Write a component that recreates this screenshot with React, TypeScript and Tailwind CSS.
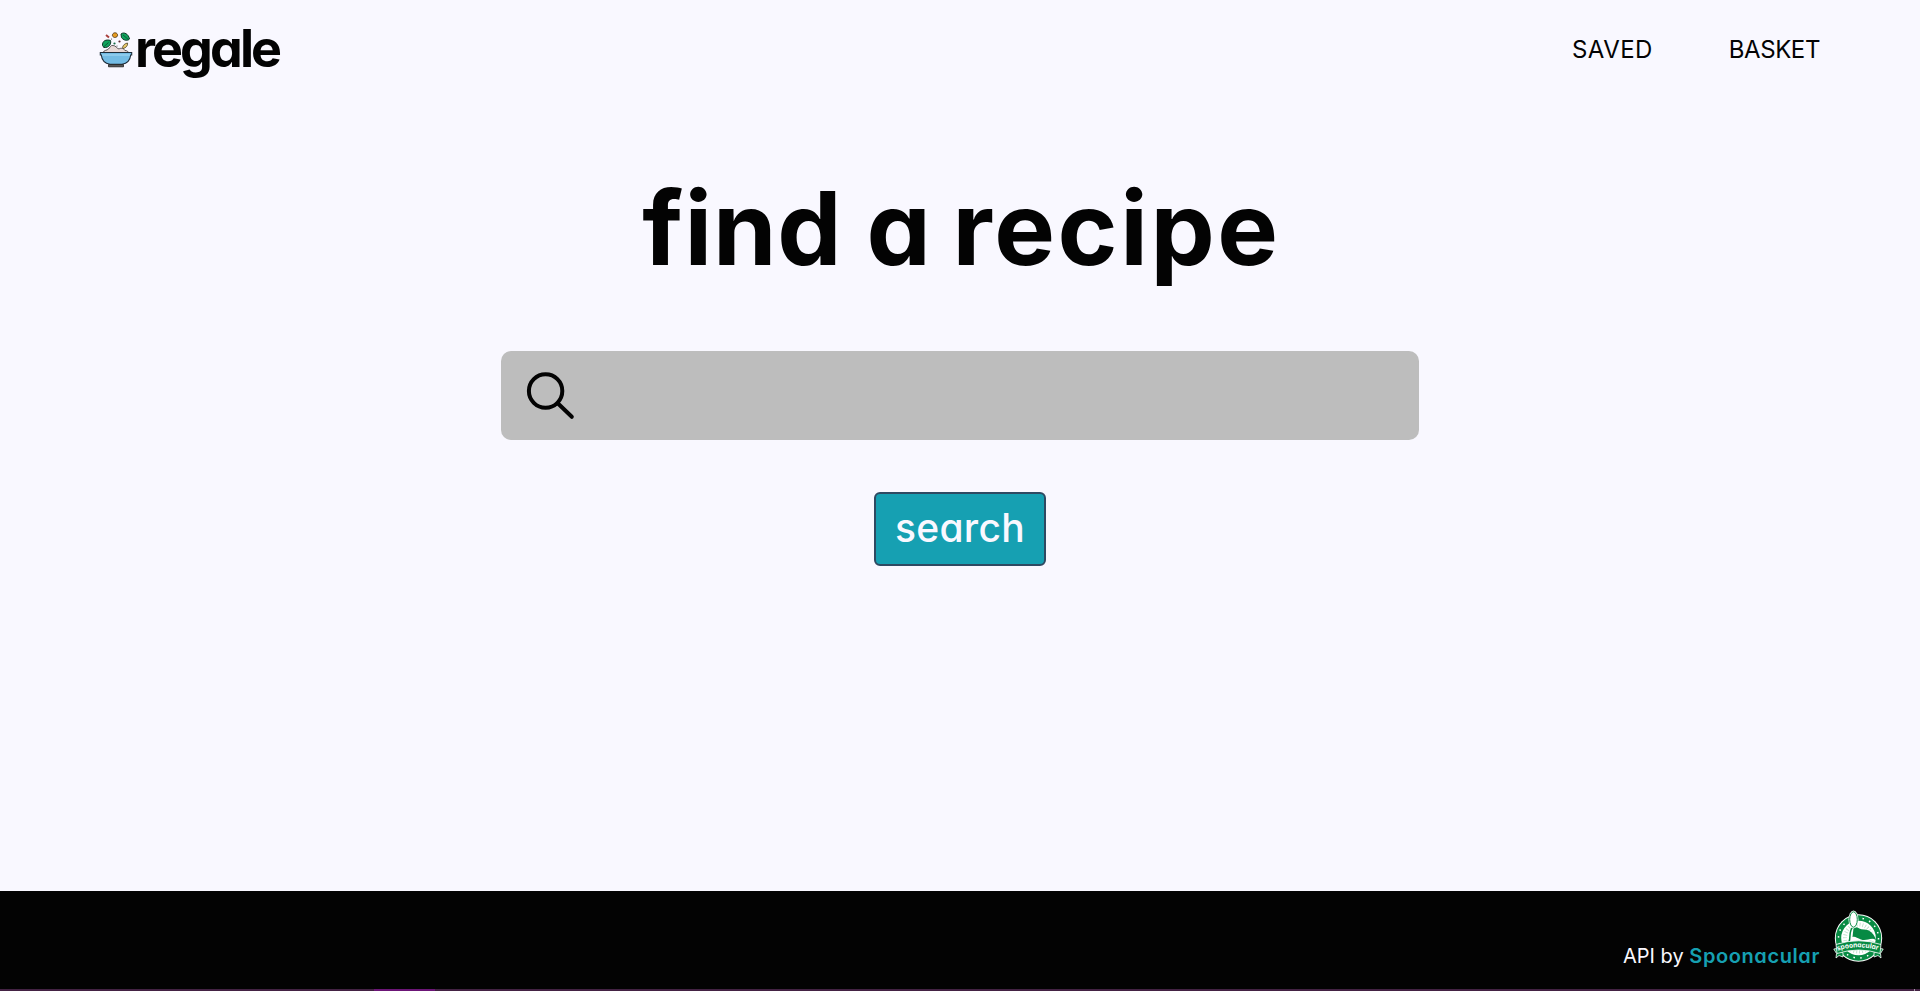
function BowlIcon() {
  return (
    <svg viewBox="0 0 34 38" className="mt-px h-[38px] w-[34px] shrink-0" aria-hidden="true">
      <path d="M4 20.500C5 18 8 18.500 9.500 17C11 15.500 11.500 13 14 13.500C17 13.500 17.500 16.500 20 17C22 15.500 25 16.500 26 18.500C28 18.500 29.500 19.500 30 21.500Z" fill="#e8d8d6" stroke="#3a3436" strokeWidth=".8" />
      <path d="M1.300 20.500H32.700V23H31.700C31.200 28 28 31.500 23 32.200H11C6 31.500 2.800 28 2.300 23H1.300Z" fill="#74bce4" stroke="#1d2c3a" strokeWidth="1.100" />
      <path d="M3 23H31" stroke="#a7daf5" strokeWidth="1" />
      <path d="M9.500 32.500H24.500V34.800H9.500Z" fill="#555" stroke="#222" strokeWidth=".8" />
      <path d="M3.500 13.500C3 9 7 7 11.500 8.500C12.500 12 10 16 5 15.500Z" fill="#0fa35c" stroke="#12382a" strokeWidth="1" />
      <path d="M4 15.500L9.500 10.500" fill="none" stroke="#0b4b32" strokeWidth=".8" />
      <path d="M22 2C25 -.5 29.500 2 30.500 7C28 9.500 24 8 22.500 5.500Z" fill="#0fa35c" stroke="#12382a" strokeWidth="1" />
      <path d="M24 3L30 8" fill="none" stroke="#0b4b32" strokeWidth=".8" />
      <path d="M13.500 2.500C14.500 0 18 .5 18.500 2.500C19 4.500 17.500 5.500 15.500 5.500C14 5 13 4 13.500 2.500Z" fill="#e49b23" stroke="#463014" strokeWidth=".8" />
      <path d="M7 3L10 5.500" stroke="#a93f3c" strokeWidth="2" />
      <path d="M23.500 15.500C24 13 26 11.500 28.500 11C29 13.500 27 16 24 16.500Z" fill="#e8c96b" stroke="#463d22" strokeWidth=".8" />
      <circle cx="15.500" cy="11.500" r="1.100" fill="#176b48" />
      <circle cx="20.500" cy="9.500" r="1.100" fill="#5c2730" />
      <circle cx="18" cy="14" r=".6" fill="#444" />
      <circle cx="12.500" cy="7" r=".6" fill="#444" />
    </svg>
  );
}

function SpoonBadge() {
  return (
    <svg viewBox="0 0 52 54" className="h-[54px] w-[52px]" aria-hidden="true">
      <circle cx="25.500" cy="28" r="23.700" fill="#fff" />
      <circle cx="25.500" cy="28" r="20" fill="none" stroke="#078a43" strokeWidth="5.400" />
      <circle cx="25.500" cy="28" r="20" fill="none" stroke="#fff" strokeWidth="1.500" strokeDasharray="1.500 5.480" />
      <circle cx="25.500" cy="28" r="13.500" fill="none" stroke="#b9dfc9" strokeWidth="4" strokeDasharray=".8 2" />
      <path d="M20.500 18C24 15.500 26 19.500 31 19.500C37 19.500 41 24 43 30C38 26.500 34 31.500 28 29.500C24 28 22 26 19.500 27Z" fill="#078a43" />
      <path d="M20 17C15.500 21 18 27 16 32" fill="none" stroke="#078a43" strokeWidth="1.500" />
      <ellipse cx="20.500" cy="9.500" rx="5" ry="9" fill="#fff" />
      <ellipse cx="20.500" cy="9.500" rx="3.800" ry="7.700" fill="#fff" stroke="#078a43" strokeWidth="1" />
      <path d="M.8 39L4 38.500L10 43V47L6 45.500L3 48L3.500 43.500ZM50.200 39L47 38.500L41 43V47L45 45.500L48 48L47.500 43.500Z" fill="#078a43" stroke="#fff" strokeWidth=".8" />
      <path d="M3 34.500Q25.500 27 48 34.500L47 43.500Q25.500 36.500 4 43.500Z" fill="#078a43" stroke="#fff" strokeWidth=".8" />
      <path id="ribbon" d="M4.500 40.700Q25.500 34 46.500 40.700" fill="none" />
      <text fill="#fff" fontFamily="Inter, sans-serif" fontWeight="700" fontSize="7">
        <textPath href="#ribbon" textLength="41" lengthAdjust="spacingAndGlyphs">spoonacular</textPath>
      </text>
    </svg>
  );
}

export default function App() {
  return (
    <div className="flex h-[991px] w-full flex-col overflow-hidden bg-[#f9f8ff] font-['Inter',sans-serif] text-[#030303] [font-feature-settings:'cv11']">
      <header className="flex h-[100px] items-start justify-between pr-[100px] pl-[99px]">
        <a href="#" className="flex pt-[31px]">
          <BowlIcon />
          <span className="-mt-[13px] ml-[2px] block text-[52px] leading-[62px] font-bold tracking-[-2.9px]">regale</span>
        </a>
        <nav className="flex gap-[76px] pt-[34px] text-[24px] leading-[31px]">
          <a href="#" className="tracking-[0.4px]">SAVED</a>
          <a href="#" className="tracking-[-0.4px]">BASKET</a>
        </nav>
      </header>
      <main className="flex flex-1 flex-col items-center">
        <h1 className="mt-[66px] pl-[3px] text-[102px] leading-[124px] font-bold whitespace-nowrap">
          <span className="tracking-[0.8px]">find</span> a<span className="[word-spacing:-5px] tracking-[2.6px]"> recipe</span>
        </h1>
        <form className="mt-[61px] flex flex-col items-center" onSubmit={(e) => e.preventDefault()}>
          <label className="flex h-[89px] w-[918px] items-center rounded-[10px] bg-[#bdbdbd] pl-[24px]">
            <svg viewBox="0 0 52 52" className="size-[52px] shrink-0" fill="none" stroke="#030303" strokeWidth="4" strokeLinecap="round">
              <circle cx="20.600" cy="21" r="16.700" />
              <path d="M33 33.500L46.800 46.800" />
            </svg>
            <input aria-label="search" className="h-full flex-1 bg-transparent px-4 text-[32px] outline-none" />
          </label>
          <button className="mt-[52px] h-[74px] w-[172px] rounded-[6px] border-2 border-[#2e4a62] bg-[#16a0b2] pb-[2px] text-[39px] leading-[48px] font-medium tracking-[0.3px] text-[#f9f8ff]">search</button>
        </form>
      </main>
      <footer className="flex h-[100px] flex-col bg-[#030303]">
        <div className="flex h-[98px] items-start justify-end pr-[35px] text-[20px] leading-[24px] text-[#f9f8ff]">
          <p className="mt-[53px] whitespace-nowrap">API by <a href="#" className="font-semibold tracking-[0.6px] text-[#16a0b2]">Spoonacular</a></p>
          <a href="#" className="mt-[19px] ml-[13px]"><SpoonBadge /></a>
        </div>
        <div className="flex h-[2px] bg-[#432243] pl-[374px]">
          <div className="h-full w-[61px] bg-[#6b1576]" />
          <div className="ml-[1479px] h-full w-px bg-[#a795a7]" />
        </div>
      </footer>
    </div>
  );
}
